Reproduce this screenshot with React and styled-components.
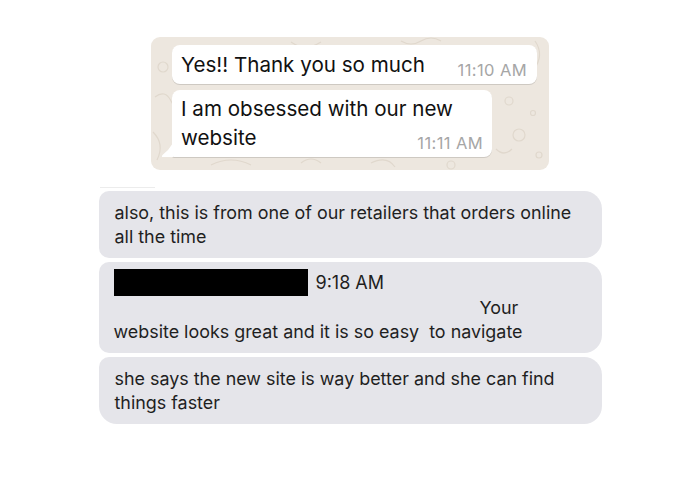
import React from 'react'
import styled, { createGlobalStyle } from 'styled-components'

const GlobalStyle = createGlobalStyle`
  body {
    margin: 0;
    background: #ffffff;
    font-family: Inter, 'Liberation Sans', Arial, sans-serif;
    color: #1d1d1f;
  }
`

const Page = styled.div`
  width: 700px;
  height: 500px;
  display: flex;
  flex-direction: column;
  align-items: center;
  padding-top: 37px;
  box-sizing: border-box;
`

const ChatPanel = styled.div`
  position: relative;
  width: 398px;
  height: 133px;
  box-sizing: border-box;
  padding: 8px 12px 0 21px;
  background: #ede7df;
  border-radius: 9px;
  overflow: hidden;
  display: flex;
  flex-direction: column;
  align-items: flex-start;
  gap: 6px;
`

const Doodles = styled.svg`
  position: absolute;
  inset: 0;
  pointer-events: none;
`

const WaBubble = styled.div`
  position: relative;
  z-index: 1;
  box-sizing: border-box;
  width: ${(p) => p.$width}px;
  height: ${(p) => p.$height}px;
  padding: ${(p) => p.$pad};
  background: #ffffff;
  border-radius: ${(p) => (p.$tail ? '8px 8px 8px 2px' : '8px')};
  box-shadow: 0 1px 0.5px rgba(0, 0, 0, 0.13);
  font-size: 20.6px;
  line-height: 29px;
  color: #111;

  ${(p) =>
    p.$tail &&
    `
    &::before {
      content: '';
      position: absolute;
      left: -11px;
      bottom: 0;
      width: 12px;
      height: 14px;
      background: #ffffff;
      clip-path: path('M12 0 L12 14 L2 14 Q0 14 1.5 12 Q8 7 12 0 Z');
    }
  `}
`

const WaTime = styled.span`
  position: absolute;
  right: ${(p) => p.$right}px;
  bottom: ${(p) => p.$bottom}px;
  font-size: 16.5px;
  letter-spacing: 0.4px;
  line-height: 17px;
  color: #a6a6a6;
`

const Divider = styled.div`
  align-self: flex-start;
  margin: 17px 0 3px 100px;
  width: 55px;
  height: 1px;
  background: #ececec;
`

const Thread = styled.div`
  width: 503px;
  display: flex;
  flex-direction: column;
  gap: 4px;
`

const GrayBubble = styled.div`
  box-sizing: border-box;
  padding: ${(p) => p.$pad};
  background: #e5e5ea;
  border-radius: ${(p) => (p.$last ? '10px 18px 18px 18px' : '10px 18px 18px 10px')};
  font-size: 17.9px;
  line-height: 24px;
  color: #1f1f1f;
`

const HeaderRow = styled.div`
  display: flex;
  align-items: center;
  gap: 8px;
  height: 27px;
  font-size: 18px;
`

const Redacted = styled.div`
  width: 194px;
  height: 27px;
  background: #000;
`

const Line = styled.div`
  padding-left: ${(p) => p.$indent || 0}px;
`

export default function App() {
  return (
    <>
      <GlobalStyle />
      <Page>
        <ChatPanel>
          <Doodles width="398" height="133" viewBox="0 0 398 133">
            <g fill="none" stroke="#e0d8cd" strokeWidth="1.2">
              <circle cx="12" cy="30" r="5" />
              <path d="M4 60 q10 -8 16 4 t14 2" />
              <path d="M2 95 q12 12 4 28" />
              <circle cx="24" cy="112" r="3" />
              <path d="M60 128 q20 -10 40 0" />
              <path d="M140 5 q14 10 30 0" />
              <path d="M220 126 q16 -8 24 4" />
              <circle cx="300" cy="128" r="4" />
              <circle cx="358" cy="64" r="4" />
              <circle cx="368" cy="98" r="6" />
              <path d="M384 4 q10 14 -2 30" />
              <circle cx="382" cy="76" r="2.5" />
              <path d="M345 112 q8 8 16 0" />
              <circle cx="388" cy="118" r="3" />
              <path d="M250 4 q10 6 20 0 q10 -6 20 0" />
              <path d="M150 126 q10 -8 20 0" />
            </g>
          </Doodles>
          <WaBubble $width={365} $height={39} $pad="5px 11px 5px 9px">
            Yes!! Thank you so much
            <WaTime $right={10} $bottom={5}>11:10 AM</WaTime>
          </WaBubble>
          <WaBubble $width={320} $height={67} $pad="4px 10px 5px 9px" $tail>
            I am obsessed with our new
            <br />
            website
            <WaTime $right={9} $bottom={5}>11:11 AM</WaTime>
          </WaBubble>
        </ChatPanel>
        <Divider />
        <Thread>
          <GrayBubble $pad="10px 16px 9px">
            also, this is from one of our retailers that orders online
            <br />
            all the time
          </GrayBubble>
          <GrayBubble $pad="7px 16px 9px 15px">
            <HeaderRow>
              <Redacted />
              <span>9:18 AM</span>
            </HeaderRow>
            <Line $indent={366}>Your</Line>
            <Line>website looks great and it is so easy&nbsp; to navigate</Line>
          </GrayBubble>
          <GrayBubble $pad="10px 16px 9px" $last>
            she says the new site is way better and she can find
            <br />
            things faster
          </GrayBubble>
        </Thread>
      </Page>
    </>
  )
}
